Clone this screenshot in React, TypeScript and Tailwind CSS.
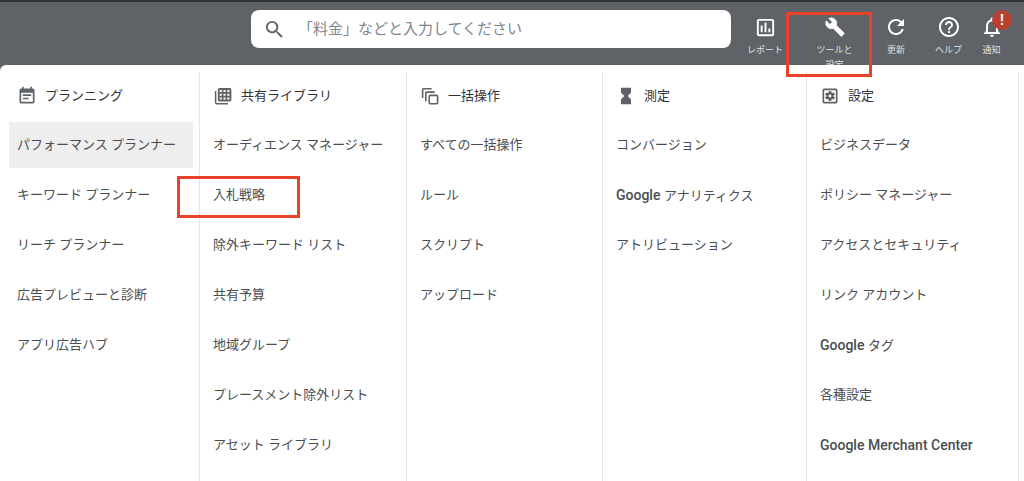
import type { ReactNode } from "react";
import {
  MdEventNote,
  MdHelpOutline,
  MdHourglassFull,
  MdNotificationsNone,
  MdOutlineAssessment,
  MdOutlineSettingsApplications,
  MdRefresh,
  MdSearch,
} from "react-icons/md";

function WrenchIcon() {
  return (
    <svg
      viewBox="0 0 24 24"
      className="size-5 overflow-visible"
      fill="currentColor"
      stroke="currentColor"
      strokeWidth="1"
      strokeLinejoin="round"
      aria-hidden="true"
    >
      <path d="M22.7 19l-9.1-9.1c.9-2.3.4-5-1.5-6.9-2-2-5-2.4-7.4-1.3L9 6 6 9 1.6 4.7C.4 7.1.9 10.1 2.9 12.1c1.9 1.9 4.6 2.4 6.9 1.5l9.1 9.1c.4.4 1 .4 1.4 0l2.3-2.3c.5-.4.5-1.1.1-1.4z" />
    </svg>
  );
}

function LibraryIcon() {
  return (
    <svg viewBox="0 0 20 20" className="size-5" fill="none" aria-hidden="true">
      <rect x="4.8" y="2" width="13.6" height="13.6" rx="1.8" fill="currentColor" />
      <path
        d="M6.7 3.9h2.1V6H6.7zM10.5 3.9h2.1V6h-2.1zM14.3 3.9h2.1V6h-2.1zM6.7 7.7h2.1v2.1H6.7zM10.5 7.7h2.1v2.1h-2.1zM14.3 7.7h2.1v2.1h-2.1zM6.7 11.5h2.1v2.1H6.7zM10.5 11.5h2.1v2.1h-2.1zM14.3 11.5h2.1v2.1h-2.1z"
        fill="#fff"
      />
      <path d="M2.6 5v11.4a1.4 1.4 0 0 0 1.4 1.4h11" stroke="currentColor" strokeWidth="1.5" />
    </svg>
  );
}

function BulkIcon() {
  return (
    <svg
      viewBox="0 0 20 20"
      className="size-5"
      fill="none"
      stroke="currentColor"
      strokeWidth="1.6"
      aria-hidden="true"
    >
      <rect x="9.2" y="9.4" width="8.4" height="8.4" rx="1" />
      <path d="M5.8 15.3V7.2a1.1 1.1 0 0 1 1.1-1.1h7.9" />
      <path d="M2.6 12V3.9a1.1 1.1 0 0 1 1.1-1.1h7.9" />
    </svg>
  );
}

type Column = {
  title: string;
  icon: ReactNode;
  items: string[];
};

const columns: Column[] = [
  {
    title: "プランニング",
    icon: <MdEventNote className="size-5" />,
    items: [
      "パフォーマンス プランナー",
      "キーワード プランナー",
      "リーチ プランナー",
      "広告プレビューと診断",
      "アプリ広告ハブ",
    ],
  },
  {
    title: "共有ライブラリ",
    icon: <LibraryIcon />,
    items: [
      "オーディエンス マネージャー",
      "入札戦略",
      "除外キーワード リスト",
      "共有予算",
      "地域グループ",
      "プレースメント除外リスト",
      "アセット ライブラリ",
    ],
  },
  {
    title: "一括操作",
    icon: <BulkIcon />,
    items: ["すべての一括操作", "ルール", "スクリプト", "アップロード"],
  },
  {
    title: "測定",
    icon: <MdHourglassFull className="size-5" />,
    items: ["コンバージョン", "Google アナリティクス", "アトリビューション"],
  },
  {
    title: "設定",
    icon: <MdOutlineSettingsApplications className="size-5" />,
    items: [
      "ビジネスデータ",
      "ポリシー マネージャー",
      "アクセスとセキュリティ",
      "リンク アカウント",
      "Google タグ",
      "各種設定",
      "Google Merchant Center",
    ],
  },
];

// Latin words are set in medium weight, Japanese ones in regular.
function ItemText({ text }: { text: string }) {
  const latin = text.match(/^[A-Za-z ]+/)?.[0] ?? "";
  return (
    <span className="whitespace-pre">
      {latin && <span className="text-sm font-medium">{latin}</span>}
      {text.slice(latin.length)}
    </span>
  );
}

function Action({ icon, label, children }: { icon: ReactNode; label: ReactNode; children?: ReactNode }) {
  return (
    <button type="button" className="relative flex flex-col items-center gap-1 pt-[13px] text-white">
      <span className="flex h-6 items-center">{icon}</span>
      <span className="text-[9px] leading-[15px] whitespace-nowrap text-[#dfe0e1]">{label}</span>
      {children}
    </button>
  );
}

function MenuColumn({ column, first }: { column: Column; first: boolean }) {
  return (
    <section className={`border-r border-[#e6e6e6] pr-[6px] ${first ? "pl-[9px]" : "pl-[5px]"}`}>
      <h2 className="mb-[2px] flex h-12 items-center gap-2 pl-2 text-[13px] text-[#2f3236]">
        <span className="text-[#5f6368]">{column.icon}</span>
        {column.title}
      </h2>
      <ul className="flex flex-col gap-1">
        {column.items.map((item) => (
          <li key={item} className="relative">
            <a
              href="#"
              className={`flex h-[46px] items-center px-2 text-[13px] text-[#4a4d51] ${
                item === "パフォーマンス プランナー" ? "bg-[#eeeeee]" : ""
              }`}
            >
              <ItemText text={item} />
            </a>
            {item === "入札戦略" && (
              <span className="pointer-events-none absolute top-1 -left-7 h-[42px] w-[123px] border-3 border-[#ea4228]" />
            )}
          </li>
        ))}
      </ul>
    </section>
  );
}

export default function App() {
  return (
    <div className="flex min-h-screen flex-col bg-[#5f6368] font-[Roboto,'Noto_Sans_CJK_JP',sans-serif]">
      <header className="grid h-[65px] grid-cols-[251fr_480fr_293fr] border-t-2 border-[#333333]">
        <label className="col-start-2 mt-2 flex h-[38px] items-center rounded-lg bg-white pl-3">
          <MdSearch className="size-[23px] shrink-0 text-[#5f6368]" />
          <input
            type="search"
            aria-label="検索"
            placeholder="「料金」などと入力してください"
            className="ml-3 h-full min-w-0 flex-1 bg-transparent text-[15px] text-[#3c4043] outline-none placeholder:text-[#80868b]"
          />
        </label>
        <nav className="grid grid-cols-[68fr_71fr_52fr_53fr_33fr_16fr]">
          <Action icon={<MdOutlineAssessment className="size-[23px]" />} label="レポート" />
          <Action
            icon={<WrenchIcon />}
            label={
              <>
                ツールと
                <br />
                設定
              </>
            }
          >
            <span className="pointer-events-none absolute top-[10px] -left-[13px] z-20 h-[65px] w-[86px] border-3 border-[#ea4228]" />
          </Action>
          <Action icon={<MdRefresh className="size-6" />} label="更新" />
          <Action icon={<MdHelpOutline className="size-6" />} label="ヘルプ" />
          <Action icon={<MdNotificationsNone className="size-6" />} label="通知">
            <span className="absolute top-2 left-[17px] flex size-5 items-center justify-center rounded-full bg-[#b93f2f] text-sm font-bold">
              !
            </span>
          </Action>
        </nav>
      </header>
      <main className="relative z-10 grid flex-1 grid-cols-[200fr_207fr_196fr_204fr_212fr_5fr] rounded-tl-md bg-white pt-[7px]">
        {columns.map((column, index) => (
          <MenuColumn key={column.title} column={column} first={index === 0} />
        ))}
      </main>
    </div>
  );
}
